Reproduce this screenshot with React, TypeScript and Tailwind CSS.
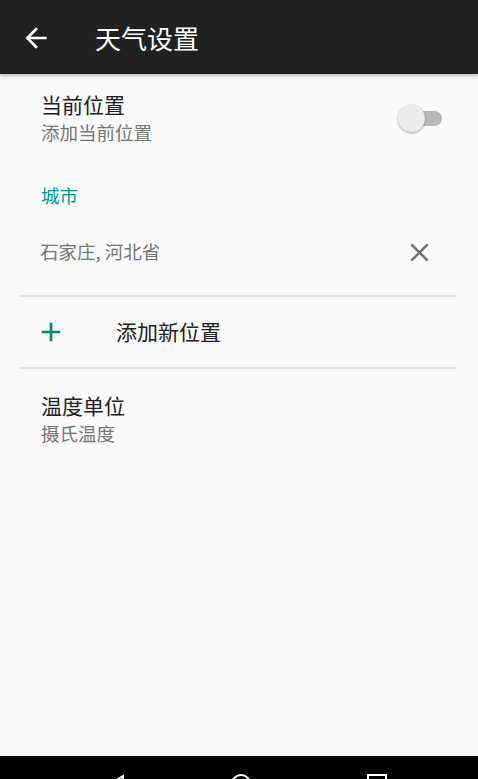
import { useState } from "react";

const font = { fontFamily: '"Noto Sans CJK SC", "Noto Sans", Roboto, sans-serif' };

function Divider() {
    return <div className="ml-[19px] mr-[21px] h-[2px] bg-[#e2e2e2]"></div>;
}

export default function App() {
    const [current, setCurrent] = useState(false);

    return (
        <div className="h-[779px] w-full overflow-hidden bg-[#fafafa] flex flex-col" style={font}>
            <div className="h-[74px] shrink-0 bg-[#212121] flex items-center shadow-[0_2px_4px_rgba(0,0,0,0.25)] relative z-10">
                <svg className="ml-[20px] mt-[2px]" width="32" height="32" viewBox="0 0 24 24" fill="#ffffff">
                    <path d="M20 11H7.83l5.59-5.59L12 4l-8 8 8 8 1.41-1.41L7.83 13H20v-2z" />
                </svg>
                <h1 className="ml-[43px] mt-[2px] text-[26px] leading-none text-white">天气设置</h1>
            </div>

            <div className="h-[682px] shrink-0">
                <div className="flex items-center pt-[16px] pl-[41px] pr-[36px]">
                    <div className="flex-1">
                        <p className="text-[21px] leading-[28px] text-[#212121]">当前位置</p>
                        <p className="text-[18.5px] leading-[28px] text-[#757575]">添加当前位置</p>
                    </div>
                    <button onClick={() => setCurrent(!current)} className="relative w-[44px] h-[28px]">
                        <span className={"absolute right-0 top-[7px] w-[37px] h-[15px] rounded-full " + (current ? "bg-[#80cbc4]" : "bg-[#b9b9b9]")}></span>
                        <span className={"absolute top-[1px] w-[27px] h-[27px] rounded-full shadow-[0_1px_3px_rgba(0,0,0,0.35)] " + (current ? "right-[-4px] bg-[#009688]" : "left-0 bg-[#ececec]")}></span>
                    </button>
                </div>

                <p className="mt-[36px] pl-[41px] text-[18.5px] leading-[26px] text-[#009688]">城市</p>

                <div className="mt-[20px] h-[48px] flex items-center pl-[40px] pr-[43px]">
                    <span className="flex-1 text-[18.5px] text-[#757575]">石家庄, 河北省</span>
                    <svg width="31" height="31" viewBox="0 0 24 24" fill="#737373">
                        <path d="M19 6.41L17.59 5 12 10.59 6.41 5 5 6.41 10.59 12 5 17.59 6.41 19 12 13.41 17.59 19 19 17.59 13.41 12z" />
                    </svg>
                </div>

                <div className="mt-[19px]"><Divider /></div>

                <div className="h-[70px] flex items-center">
                    <svg className="ml-[35px]" width="32" height="32" viewBox="0 0 24 24" fill="#00897b">
                        <path d="M19 13h-6v6h-2v-6H5v-2h6V5h2v6h6v2z" />
                    </svg>
                    <span className="ml-[49px] text-[21px] text-[#212121]">添加新位置</span>
                </div>

                <Divider />

                <div className="pt-[22px] pl-[41px]">
                    <p className="text-[21px] leading-[28px] text-[#212121]">温度单位</p>
                    <p className="text-[18.5px] leading-[28px] text-[#757575]">摄氏温度</p>
                </div>
            </div>

            <div className="h-[56px] shrink-0 bg-black flex items-center">
                <svg className="ml-[104px]" width="24" height="24" viewBox="0 0 24 24" fill="none" stroke="#ffffff" strokeWidth="2">
                    <path d="M19 4L6 12l13 8z" />
                </svg>
                <svg className="ml-[102px]" width="22" height="22" viewBox="0 0 22 22" fill="none" stroke="#ffffff" strokeWidth="2">
                    <circle cx="11" cy="11" r="9" />
                </svg>
                <svg className="ml-[114px]" width="22" height="22" viewBox="0 0 22 22" fill="none" stroke="#ffffff" strokeWidth="2">
                    <rect x="2" y="2" width="18" height="18" />
                </svg>
            </div>
        </div>
    );
}
